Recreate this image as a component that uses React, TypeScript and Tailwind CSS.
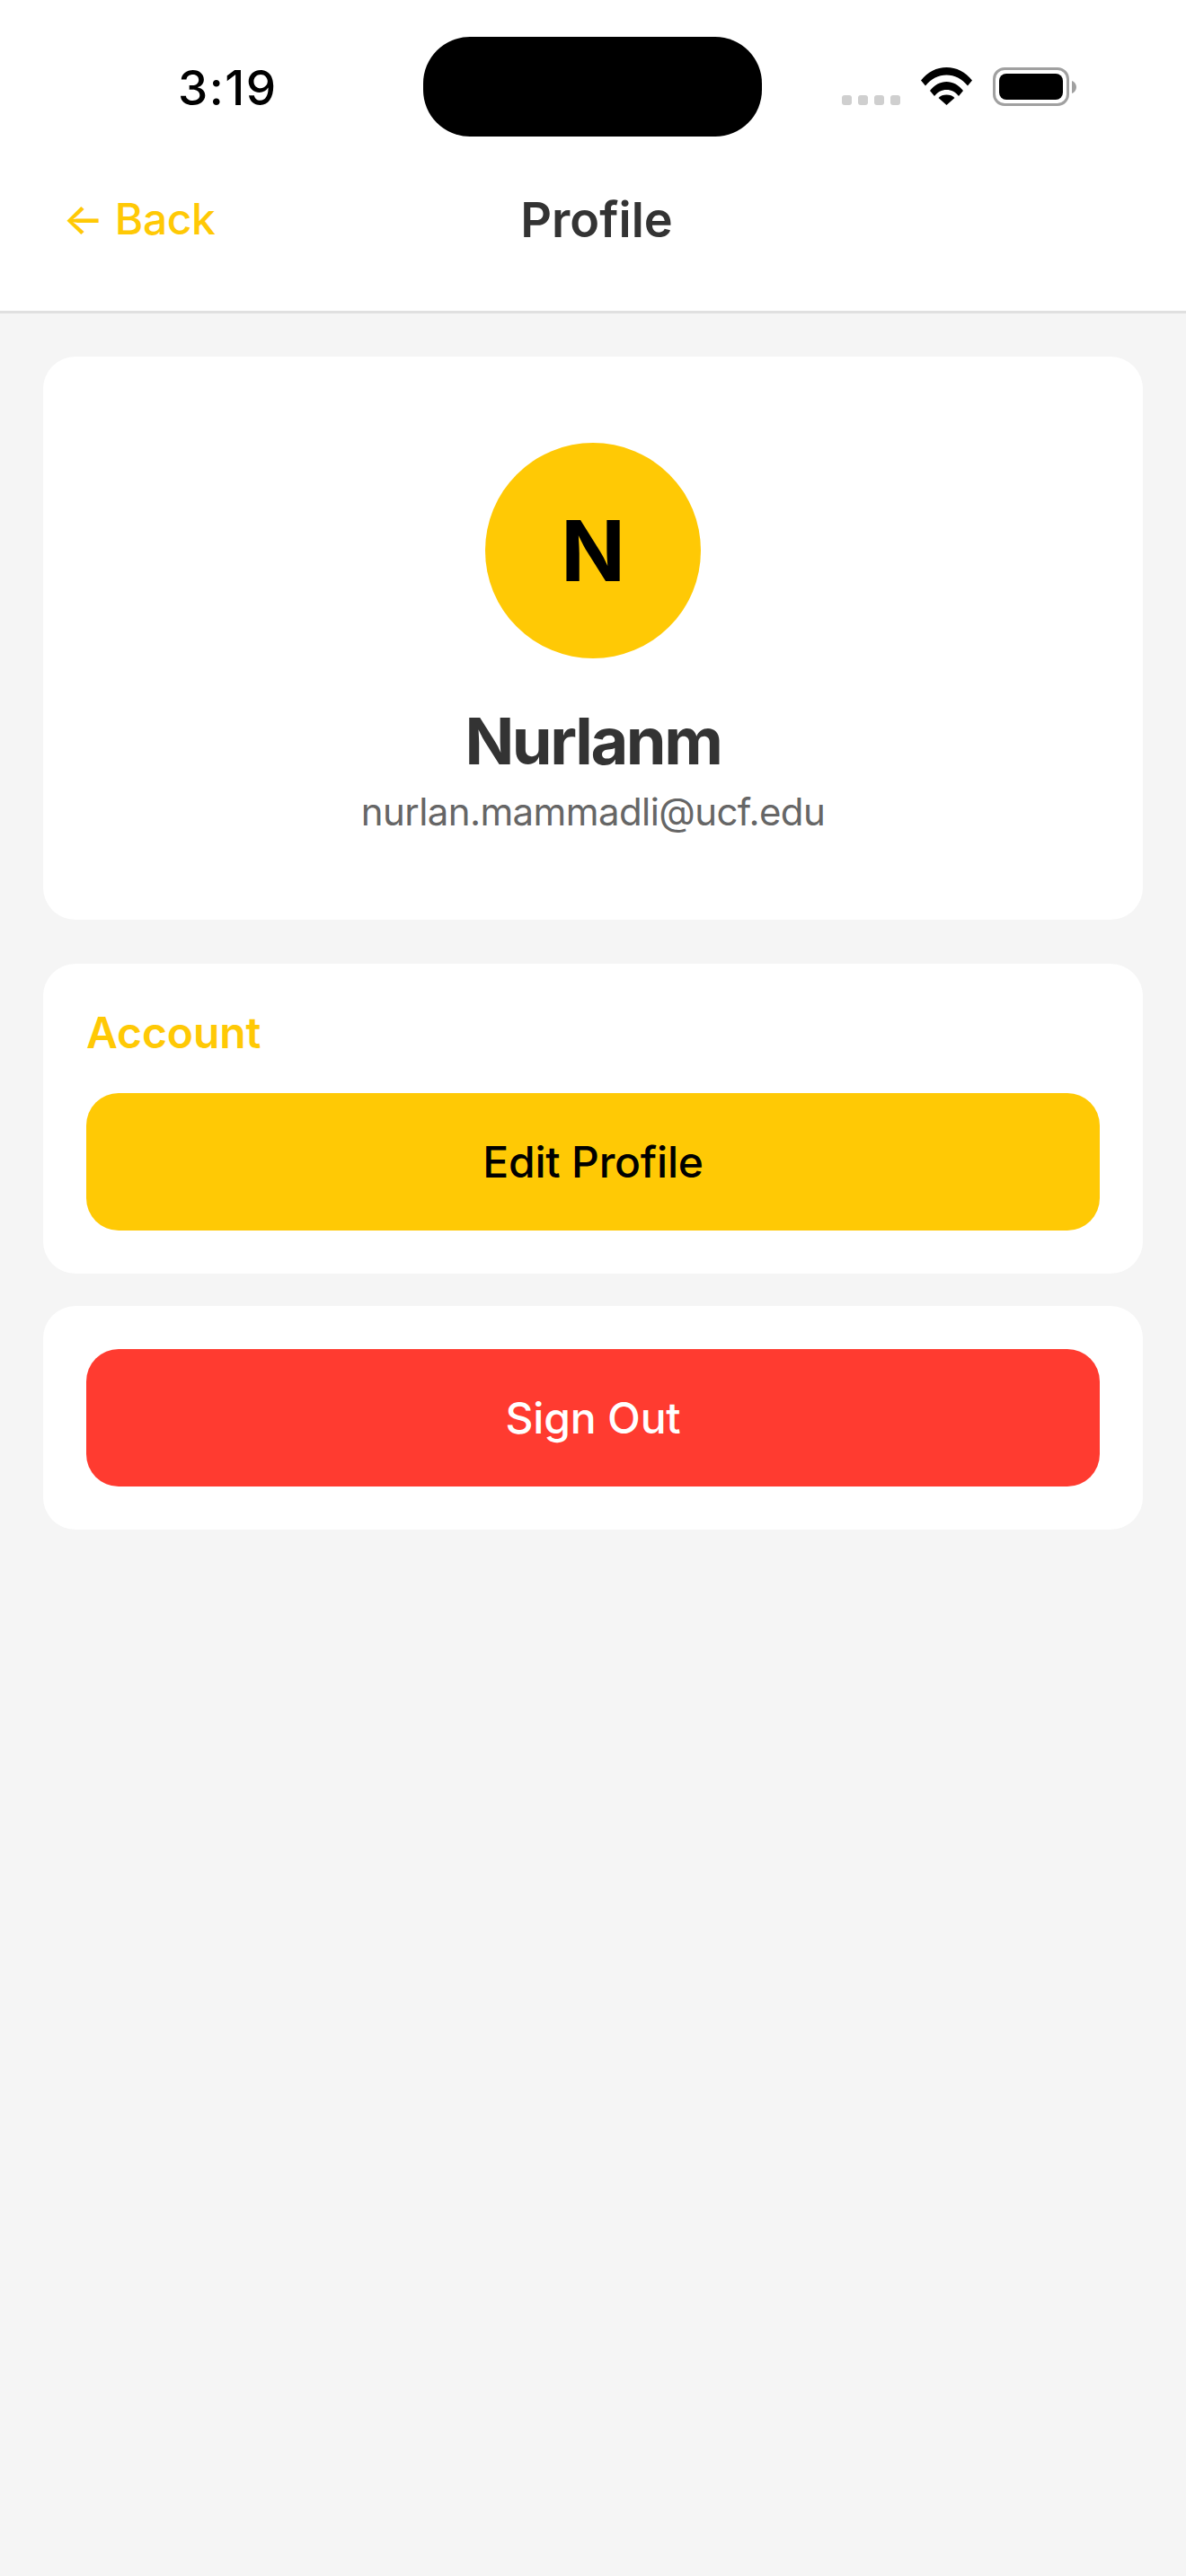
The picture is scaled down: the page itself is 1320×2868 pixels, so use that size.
export default function App() {
  return (
    <div className="min-h-[2868px] w-[1320px] bg-[#f5f5f5] font-['Inter','Liberation_Sans',sans-serif]">
      <header className="box-content h-[346px] border-b-[3px] border-[#e0e0e0] bg-white">
        <div className="flex h-[152px] items-start pt-[41px]">
          <div className="w-[471px] pl-[198px] pt-[31px] text-[53px] font-medium leading-[52px] tracking-[1.5px] text-black">3:19</div>
          <div className="h-[111px] w-[377px] rounded-[52px] bg-black" />
          <div className="ml-[89px] mt-[65px] flex gap-[7px]">
            <span className="h-[11px] w-[11px] rounded-[3px] bg-[#cfcfcf]" />
            <span className="h-[11px] w-[11px] rounded-[3px] bg-[#cfcfcf]" />
            <span className="h-[11px] w-[11px] rounded-[3px] bg-[#cfcfcf]" />
            <span className="h-[11px] w-[11px] rounded-[3px] bg-[#cfcfcf]" />
          </div>
          <svg className="ml-[23px] mt-[34px]" width="57" height="42" viewBox="0 0 57 42">
            <path d="M0 14.500C7.500 5 17.500 0 28.500 0S49.500 5 57 14.500L52 20.500C45.500 12.500 37.500 8.500 28.500 8.500S11.500 12.500 5 20.500Z" fill="#000" />
            <path d="M10 26C15 19.500 21.500 16 28.500 16S42 19.500 47 26L42 32C38.500 27.500 34 25 28.500 25S18.500 27.500 15 32Z" fill="#000" />
            <path d="M19.500 34C21.500 31.500 25 30.500 28.500 30.500S35.500 31.500 37.500 34L28.500 42Z" fill="#000" />
          </svg>
          <div className="ml-[23px] mt-[34px] flex items-center">
            <div className="h-[43px] w-[85px] rounded-[13px] border-[3px] border-[#a0a0a0] p-[4px]">
              <div className="h-full w-full rounded-[8px] bg-black" />
            </div>
            <svg className="ml-[3px]" width="5" height="14" viewBox="0 0 5 14">
              <path d="M0 0C3 1 5 4 5 7S3 13 0 14Z" fill="#a0a0a0" />
            </svg>
          </div>
        </div>
        <div className="relative flex h-[194px] items-start pt-[63px]">
          <div className="pl-[70px] text-[48px] font-[550] leading-[58px] tracking-[-0.4px] text-[#ffc905]">← Back</div>
          <div className="absolute left-0 right-0 top-[64px] pl-[8px] text-center text-[54px] font-semibold leading-[58px] text-[#333333]">Profile</div>
        </div>
      </header>
      <main className="flex flex-col p-[48px]">
        <section className="flex h-[627px] flex-col items-center rounded-[36px] bg-white pt-[96px]">
          <div className="flex h-[240px] w-[240px] items-center justify-center rounded-full bg-[#ffc905] text-[94px] font-bold leading-none text-black">N</div>
          <div className="mt-[50px] text-[72px] font-bold leading-[84px] tracking-[-2.4px] text-[#333333]">Nurlanm</div>
          <div className="mt-[12px] text-[42px] leading-[50px] tracking-[-0.6px] text-[#666666]">nurlan.mammadli@ucf.edu</div>
        </section>
        <section className="mt-[49px] rounded-[36px] bg-white p-[48px]">
          <div className="mb-[38px] text-[48px] font-semibold leading-[58px] tracking-[-0.1px] text-[#ffc905]">Account</div>
          <button className="h-[153px] w-full rounded-[36px] bg-[#ffc905] text-[48px] font-[550] tracking-[-0.2px] text-black">Edit Profile</button>
        </section>
        <section className="mt-[36px] rounded-[36px] bg-white p-[48px]">
          <button className="h-[153px] w-full rounded-[36px] bg-[#ff3b30] text-[48px] font-[550] tracking-[-0.2px] text-white">Sign Out</button>
        </section>
      </main>
    </div>
  );
}
